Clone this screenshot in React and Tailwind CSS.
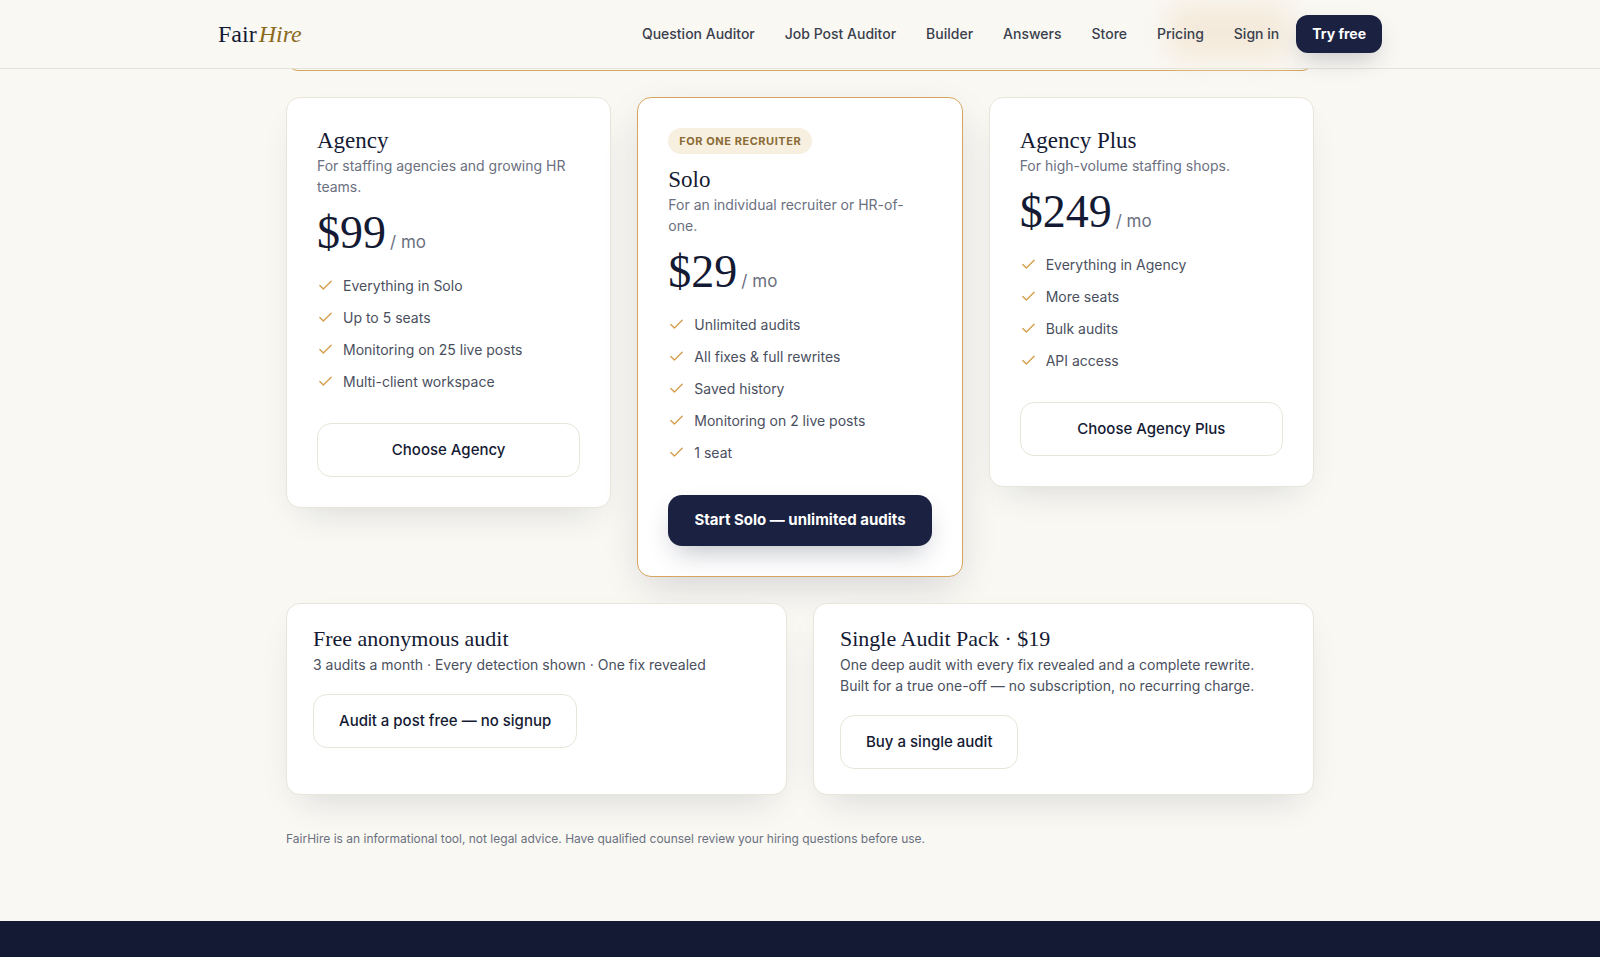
import React from 'react';
import { Check } from 'lucide-react';

const navLinks = ['Question Auditor', 'Job Post Auditor', 'Builder', 'Answers', 'Store', 'Pricing', 'Sign in'];

const plans = [
  {
    name: 'Agency',
    blurb: 'For staffing agencies and growing HR teams.',
    price: '$99',
    features: ['Everything in Solo', 'Up to 5 seats', 'Monitoring on 25 live posts', 'Multi-client workspace'],
    cta: 'Choose Agency',
  },
  {
    name: 'Solo',
    badge: 'For one recruiter',
    blurb: 'For an individual recruiter or HR-of-one.',
    price: '$29',
    features: ['Unlimited audits', 'All fixes & full rewrites', 'Saved history', 'Monitoring on 2 live posts', '1 seat'],
    cta: 'Start Solo — unlimited audits',
    featured: true,
  },
  {
    name: 'Agency Plus',
    blurb: 'For high-volume staffing shops.',
    price: '$249',
    features: ['Everything in Agency', 'More seats', 'Bulk audits', 'API access'],
    cta: 'Choose Agency Plus',
  },
];

const extras = [
  {
    title: 'Free anonymous audit',
    lines: ['3 audits a month · Every detection shown · One fix revealed'],
    cta: 'Audit a post free — no signup',
  },
  {
    title: 'Single Audit Pack · $19',
    lines: [
      'One deep audit with every fix revealed and a complete rewrite.',
      'Built for a true one-off — no subscription, no recurring charge.',
    ],
    cta: 'Buy a single audit',
  },
];

const outlineButton =
  'h-[54px] rounded-[14px] border border-[#e8e5d9] bg-white px-[25px] text-[15px] font-medium text-[#141a33]';

const Header = () => (
  <header className="sticky top-0 z-10 h-[69px] border-b border-[#e6e3da] bg-[#faf8f3]">
    <span className="absolute top-1 left-[73%] h-14 w-[122px] rounded-2xl bg-[#f4eadb] blur-md" />
    <div className="relative mx-auto flex h-full max-w-[1164px] items-center justify-between">
      <a href="#" className="flex gap-[2px] font-['Liberation_Serif',serif] text-2xl text-[#141a33]">
        <span>Fair</span>
        <span className="text-[#8c6a1c] italic">Hire</span>
      </a>
      <nav className="flex items-center text-sm font-medium text-[#3a3f4d]">
        <div className="mr-[17px] flex gap-[30px]">
          {navLinks.map((label) => (
            <a key={label} href="#">{label}</a>
          ))}
        </div>
        <a
          href="#"
          className="flex h-[38px] items-center rounded-xl bg-[#1b2140] px-4 font-bold text-white shadow-[0_10px_24px_-6px_rgba(20,26,51,0.25)]"
        >
          Try free
        </a>
      </nav>
    </div>
  </header>
);

const PlanCard = ({ plan }) => (
  <article
    className={`rounded-[14px] border bg-white p-[30px] ${
      plan.featured
        ? 'border-[#d6a560] shadow-[0_14px_40px_-8px_rgba(20,26,51,0.18)]'
        : 'border-[#e8e5d9] shadow-[0_16px_36px_-16px_rgba(20,26,51,0.16)]'
    }`}
  >
    {plan.badge && (
      <span className="mb-[13px] flex h-[26px] w-fit items-center rounded-full bg-[#f7f0e1] px-[11px] text-[11px] font-bold tracking-wider text-[#8a6a35] uppercase">
        {plan.badge}
      </span>
    )}
    <h3 className="pb-px font-['Liberation_Serif',serif] text-[23px] leading-[26px] text-[#141a33]">{plan.name}</h3>
    <p className="text-sm leading-[21px] text-[#6b7080]">{plan.blurb}</p>
    <p className="mt-[12px] flex items-baseline gap-1">
      <span className="font-['Liberation_Serif',serif] text-[46px] leading-[48px] text-[#141a33]">{plan.price}</span>
      <span className="text-[17px] leading-[24px] text-[#6b7080]">/ mo</span>
    </p>
    <ul className="mt-[18px] flex flex-col gap-[11px] text-sm leading-[21px] text-[#4a4f5e]">
      {plan.features.map((feature) => (
        <li key={feature} className="flex items-center gap-[9px]">
          <Check size={17} strokeWidth={2} className="text-[#d4a04f]" />
          {feature}
        </li>
      ))}
    </ul>
    {plan.featured ? (
      <button className="mt-[32px] h-[51px] w-full rounded-[14px] bg-[#1b2140] text-[15px] font-bold text-white shadow-[0_12px_28px_-8px_rgba(20,26,51,0.3)]">
        {plan.cta}
      </button>
    ) : (
      <button className={`mt-[31px] w-full ${outlineButton}`}>{plan.cta}</button>
    )}
  </article>
);

const ExtraCard = ({ extra }) => (
  <article className="rounded-[14px] border border-[#e8e5d9] bg-white px-[26px] pt-[23px] pb-[25px] shadow-[0_16px_36px_-16px_rgba(20,26,51,0.18)]">
    <h3 className="pb-[3px] font-['Liberation_Serif',serif] text-[22px] leading-[24px] text-[#141a33]">{extra.title}</h3>
    <div className="text-sm leading-[21px] text-[#4a4f5e]">
      {extra.lines.map((line) => (
        <p key={line}>{line}</p>
      ))}
    </div>
    <button className={`mt-[19px] ${outlineButton}`}>{extra.cta}</button>
  </article>
);

export default function App() {
  return (
    <div className="flex min-h-screen flex-col bg-[#f9f8f3] font-[Inter,'Liberation_Sans',sans-serif]">
      <Header />
      <main className="mx-auto w-full max-w-[1028px] pb-[72px]">
        {/* tail of the banner card that has scrolled under the header */}
        <div className="-mt-[46px] h-12 rounded-xl border border-[#d6a560]" />
        <section className="mt-[26px] grid grid-cols-3 items-start gap-[26px]">
          {plans.map((plan) => (
            <PlanCard key={plan.name} plan={plan} />
          ))}
        </section>
        <section className="mt-[26px] grid grid-cols-2 gap-[26px]">
          {extras.map((extra) => (
            <ExtraCard key={extra.title} extra={extra} />
          ))}
        </section>
        <p className="mt-[34px] text-xs leading-[20px] text-[#6b7080]">
          FairHire is an informational tool, not legal advice. Have qualified counsel review your hiring questions before use.
        </p>
      </main>
      <footer className="min-h-9 flex-1 bg-[#141a33]" />
    </div>
  );
}
